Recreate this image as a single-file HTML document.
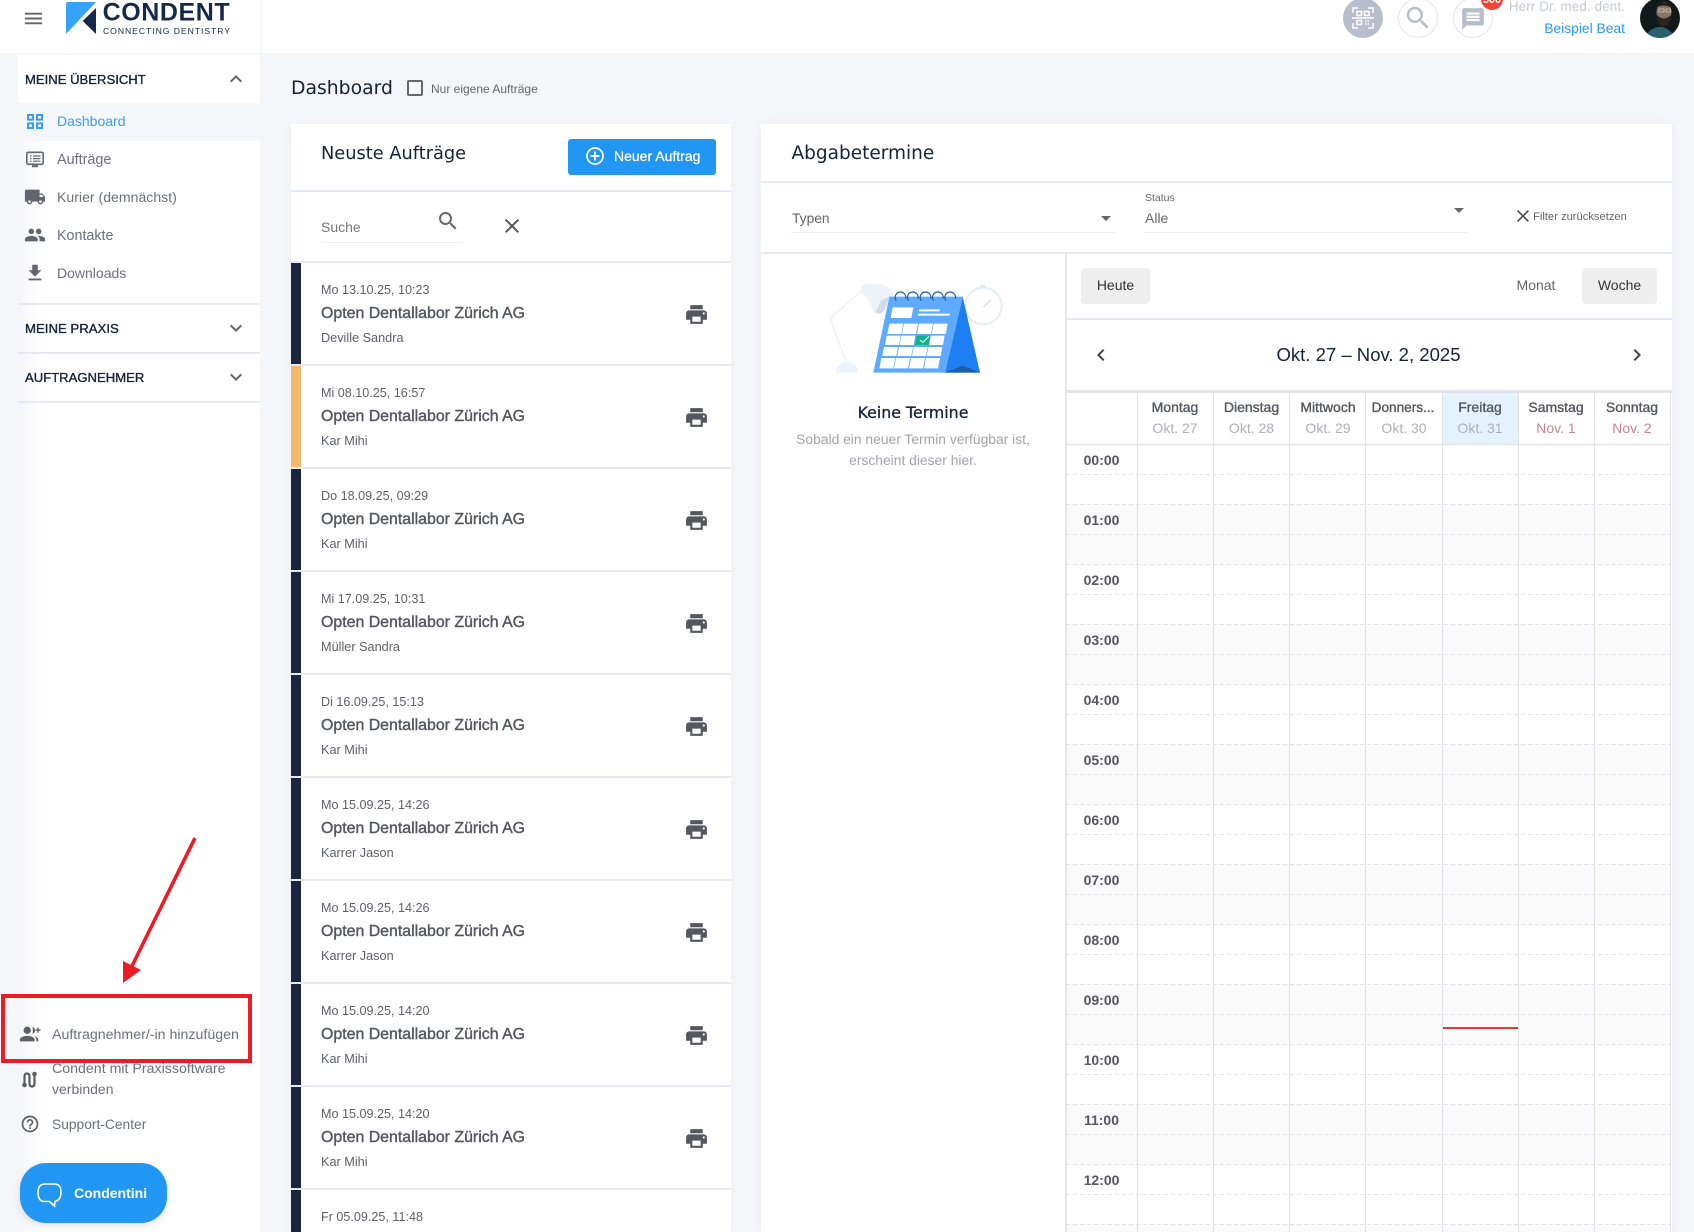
<!DOCTYPE html>
<html lang="de"><head><meta charset="utf-8"><title>Dashboard</title>
<style>
html,body{margin:0;padding:0}
body{width:1694px;height:1232px;overflow:hidden;background:#f5f6fa;position:relative;font-family:"Liberation Sans",sans-serif;color:#666}
div,svg{position:absolute}
.t{position:absolute;white-space:nowrap;line-height:20px;height:20px}
.m{-webkit-text-stroke:.3px currentColor}
.p{font-family:"DejaVu Sans",sans-serif;color:#16213a}
.hl{background:#e8e9f0;height:2px}
.sec{left:25px;font-size:13.1px;color:#16213a;-webkit-text-stroke:.35px #16213a}
.nav{left:57px;font-size:14px;color:#6d6f7a}
.row{left:291px;width:440px;height:103px}
.row .bar{left:0;top:1px;width:10px;height:102px;background:#1a2540}
.row .ln{left:0;top:0;width:440px;height:2px;background:#e8e9f0}
.d{left:30px;top:19px;font-size:12.6px;color:#5f6068}
.c{left:30px;top:43px;font-size:15.9px;color:#55565e;-webkit-text-stroke:.4px #55565e}
.n{left:30px;top:67px;font-size:12.7px;color:#5f6068}
.day{font-size:14px;color:#55565e;-webkit-text-stroke:.35px #55565e;transform:translateX(-50%);top:397px}
.dt{font-size:14px;color:#aeb0b5;transform:translateX(-50%);top:418px}
.we{color:#c9858a}
.h{left:1066px;width:71px;text-align:center;font-size:14px;font-weight:bold;color:#55565e}
</style></head>
<body>
<!-- top bar -->
<div style="left:0;top:0;width:260px;height:53px;background:#fff"></div>
<div style="left:262px;top:0;width:1432px;height:53px;background:#fff"></div>
<svg style="left:22px;top:7px" width="23" height="23" viewBox="0 0 24 24" fill="#666"><path d="M3 18h18v-2H3v2zm0-5h18v-2H3v2zm0-7v2h18V6H3z"/></svg>
<svg style="left:60px;top:0" width="180" height="40" viewBox="0 0 180 40">
<path d="M6 4Q6 2 8 2H36L6 34Z" fill="#35a3fb"/><path d="M36 8L22.7 21 36 34Z" fill="#16294a"/>
<text x="42.6" y="20.7" font-family="Liberation Sans" font-weight="bold" font-size="25" fill="#16294a" textLength="127" lengthAdjust="spacing">CONDENT</text>
<text x="43" y="33.8" font-family="Liberation Sans" font-size="8.6" fill="#16294a" textLength="127" lengthAdjust="spacing">CONNECTING DENTISTRY</text>
</svg>
<!-- top right -->
<div style="left:1343px;top:-2px;width:40px;height:40px;border-radius:50%;background:#b9bdcb"></div>
<svg style="left:1352px;top:7px" width="22" height="22" viewBox="0 0 22 22" fill="none" stroke="#fff" stroke-width="1.5"><path d="M1 6V1h5M16 1h5v5M21 16v5h-5M6 21H1v-5M0 11h22"/><rect x="5" y="4.5" width="4.5" height="4"/><rect x="12.5" y="4.5" width="4.5" height="4"/><rect x="5" y="13.5" width="4.5" height="4"/><path d="M13 14h4M13 17h4" stroke-dasharray="1.5 1"/></svg>
<div style="left:1398px;top:-2px;width:38px;height:38px;border-radius:50%;background:#fff;border:1px solid #e2e4ec"></div>
<svg style="left:1403px;top:3px" width="30" height="30" viewBox="0 0 24 24" fill="#b9bdcb"><path d="M15.5 14h-.79l-.28-.27C15.41 12.59 16 11.11 16 9.5 16 5.91 13.09 3 9.5 3S3 5.91 3 9.5 5.91 16 9.5 16c1.61 0 3.09-.59 4.23-1.57l.27.28v.79l5 4.99L20.49 19l-4.99-5zm-6 0C7.01 14 5 11.99 5 9.5S7.01 5 9.5 5 14 7.01 14 9.5 11.99 14 9.5 14z"/></svg>
<div style="left:1453px;top:-2px;width:38px;height:38px;border-radius:50%;background:#fff;border:1px solid #e2e4ec"></div>
<svg style="left:1460px;top:6px" width="26" height="26" viewBox="0 0 24 24" fill="#b9bdcb"><path d="M20 2H4c-1.1 0-1.99.9-1.99 2L2 22l4-4h14c1.1 0 2-.9 2-2V4c0-1.1-.9-2-2-2zm-2 12H6v-2h12v2zm0-3H6V9h12v2zm0-3H6V6h12v2z"/></svg>
<div style="left:1481px;top:-12px;width:22px;height:22px;border-radius:50%;background:#f44336"></div>
<svg style="left:1476px;top:0" width="32" height="10"><text x="16" y="3" text-anchor="middle" font-family="Liberation Sans" font-weight="bold" font-size="11" fill="#fff">500</text></svg>
<div class="t" style="right:69px;top:-3px;font-size:13.45px;color:#c6c9d5;letter-spacing:.1px">Herr Dr. med. dent.</div>
<div class="t" style="right:69px;top:18px;font-size:13.85px;color:#2f96f3">Beispiel Beat</div>
<svg style="left:1640px;top:-2px" width="40" height="40" viewBox="0 0 40 40"><defs><clipPath id="av"><circle cx="20" cy="20" r="20"/></clipPath></defs><g clip-path="url(#av)"><rect width="40" height="40" fill="#101a1a"/><path d="M5 40C7 33 14 29 20 29s12 4 15 11z" fill="#2a6070"/><ellipse cx="24" cy="14" rx="7.5" ry="10" fill="#8a7565"/><path d="M17 17q7 7 14 0q0 10-7 11t-7-11z" fill="#2a2421"/><path d="M17 6q7-4 14 1l-1 2q-6-3-13 0z" fill="#1f1e1b"/><rect x="19" y="11" width="5" height="3" fill="none" stroke="#ddd" stroke-width=".6"/><rect x="26" y="11" width="4.5" height="3" fill="none" stroke="#ddd" stroke-width=".6"/></g></svg>

<!-- sidebar -->
<div style="left:18px;top:55px;width:242px;height:1177px;background:linear-gradient(90deg,#f4f5f8,#fff 24px)"></div>
<div style="left:18px;top:53px;width:242px;height:2px;background:#f5f6fa"></div>
<div style="left:18px;top:55px;width:242px;height:48px;background:#fff"></div>
<div class="t sec" style="top:70px">MEINE ÜBERSICHT</div>
<svg style="left:224px;top:67px" width="24" height="24" viewBox="0 0 24 24" fill="#666"><path d="M12 8l-6 6 1.41 1.41L12 10.83l4.59 4.58L18 14z"/></svg>
<div style="left:18px;top:103px;width:242px;height:38px;background:#f5f6fa"></div>
<svg style="left:27px;top:114px" width="16" height="15" viewBox="0 0 16 15" fill="none" stroke="#3b9bf5" stroke-width="2"><rect x="1" y="1" width="5" height="4.6"/><rect x="10" y="1" width="5" height="4.6"/><rect x="1" y="9.4" width="5" height="4.6"/><rect x="10" y="9.4" width="5" height="4.6"/></svg>
<div class="t" style="left:57px;top:111px;font-size:14px;color:#3b9bf5">Dashboard</div>
<svg style="left:26px;top:151px" width="18" height="17" viewBox="0 0 18 17" fill="none" stroke="#63656e" stroke-width="1.6"><rect x=".8" y="1.3" width="16.4" height="12" rx="1.5"/><path d="M4 5h1.5M7 5h7.5M4 7.6h1.5M7 7.6h7.5M4 10.2h1.5M7 10.2h7.5" stroke-width="1.2"/><path d="M6 15.2h6" stroke-width="2"/></svg>
<div class="t nav" style="top:150px;font-size:14.4px">Aufträge</div>
<svg style="left:24px;top:186px" width="22" height="22" viewBox="0 0 24 24" fill="#63656e"><path d="M20 8h-3V4H3c-1.1 0-2 .9-2 2v11h2c0 1.66 1.34 3 3 3s3-1.34 3-3h6c0 1.66 1.34 3 3 3s3-1.34 3-3h2v-5l-3-4zM6 18.5c-.83 0-1.5-.67-1.5-1.5s.67-1.5 1.5-1.5 1.5.67 1.5 1.5-.67 1.5-1.5 1.5zm13.5-9l1.96 2.5H17V9.5h2.5zm-1.5 9c-.83 0-1.5-.67-1.5-1.5s.67-1.5 1.5-1.5 1.5.67 1.5 1.5-.67 1.5-1.5 1.5z"/></svg>
<div class="t nav" style="top:187px;font-size:14.1px">Kurier (demnächst)</div>
<svg style="left:24px;top:224px" width="22" height="22" viewBox="0 0 24 24" fill="#63656e"><path d="M16 11c1.66 0 2.99-1.34 2.99-3S17.66 5 16 5c-1.66 0-3 1.34-3 3s1.34 3 3 3zm-8 0c1.66 0 2.99-1.34 2.99-3S9.66 5 8 5C6.34 5 5 6.34 5 8s1.34 3 3 3zm0 2c-2.33 0-7 1.17-7 3.5V19h14v-2.5c0-2.33-4.67-3.5-7-3.5zm8 0c-.29 0-.62.02-.97.05 1.16.84 1.97 1.97 1.97 3.45V19h6v-2.5c0-2.33-4.67-3.5-7-3.5z"/></svg>
<div class="t nav" style="top:226px;font-size:14.3px">Kontakte</div>
<svg style="left:24px;top:262px" width="22" height="22" viewBox="0 0 24 24" fill="#63656e"><path d="M19 9h-4V3H9v6H5l7 7 7-7zM5 18v2h14v-2H5z"/></svg>
<div class="t nav" style="top:263px">Downloads</div>
<div class="hl" style="left:18px;top:303px;width:242px"></div>
<div class="t sec" style="top:319px;font-size:13.2px">MEINE PRAXIS</div>
<svg style="left:224px;top:316px" width="24" height="24" viewBox="0 0 24 24" fill="#666"><path d="M16.59 8.59L12 13.17 7.41 8.59 6 10l6 6 6-6z"/></svg>
<div class="hl" style="left:18px;top:352px;width:242px"></div>
<div class="t sec" style="top:368px">AUFTRAGNEHMER</div>
<svg style="left:224px;top:365px" width="24" height="24" viewBox="0 0 24 24" fill="#666"><path d="M16.59 8.59L12 13.17 7.41 8.59 6 10l6 6 6-6z"/></svg>
<div class="hl" style="left:18px;top:401px;width:242px"></div>

<svg style="left:19px;top:1023px" width="22" height="22" viewBox="0 0 24 24" fill="#5b5d67"><path d="M9 12a4 4 0 1 0 0-8 4 4 0 0 0 0 8zm0 2c-2.7 0-8 1.3-8 4v2h16v-2c0-2.7-5.3-4-8-4z"/><path d="M15 4.3a4 4 0 0 1 0 7.4zM16.5 14.2c2.3.6 4.5 1.8 4.5 3.8v2h-2v-2c0-1.5-1-2.8-2.500-3.800zM20 7V5h1.500v2h2v1.500h-2v2H20v-2h-2V7z"/></svg>
<div class="t" style="left:52px;top:1025px;font-size:14.2px;color:#6d6f7a">Auftragnehmer/-in hinzufügen</div>
<div class="t" style="left:52px;top:1059px;font-size:14.2px;color:#6d6f7a">Condent mit Praxissoftware</div>
<div class="t" style="left:52px;top:1079px;font-size:14px;color:#6d6f7a">verbinden</div>
<svg style="left:21px;top:1071px" width="18" height="18" viewBox="0 0 18 18" fill="none" stroke="#5b5d67" stroke-width="2.2"><path d="M3.500 13V5.500q0-3 2.500-3t2.500 3v7q0 3 2.500 3t2.500-3V4"/><circle cx="3.500" cy="14" r="2.300" fill="#5b5d67" stroke="none"/><circle cx="13.500" cy="3" r="2.300" fill="#5b5d67" stroke="none"/></svg>
<svg style="left:20px;top:1114px" width="20" height="20" viewBox="0 0 24 24" fill="#5b5d67"><path d="M11 18h2v-2h-2v2zm1-16C6.48 2 2 6.48 2 12s4.48 10 10 10 10-4.48 10-10S17.52 2 12 2zm0 18c-4.41 0-8-3.59-8-8s3.59-8 8-8 8 3.59 8 8-3.59 8-8 8zm0-14c-2.21 0-4 1.790-4 4h2c0-1.100.9-2 2-2s2 .9 2 2c0 2-3 1.750-3 5h2c0-2.250 3-2.500 3-5 0-2.210-1.790-4-4-4z"/></svg>
<div class="t" style="left:52px;top:1115px;font-size:13.8px;color:#6d6f7a">Support-Center</div>
<div style="left:20px;top:1163px;width:147px;height:60px;border-radius:26px;background:#2196f3;box-shadow:0 3px 8px rgba(0,0,0,.12)"></div>
<svg style="left:36px;top:1182px" width="27" height="26" viewBox="0 0 27 26" fill="none" stroke="#fff" stroke-width="1.6"><path d="M9 2h9q7 0 7 8t-6 9.500l-.5 4.500-5-4.500H8Q2 19 2 10.500T9 2z"/></svg>
<div class="t" style="left:74px;top:1183px;font-size:14px;font-weight:bold;color:#fff">Condentini</div>

<!-- heading -->
<div class="t p" style="left:291px;top:79px;font-size:18.8px">Dashboard</div>
<div style="left:407px;top:80px;width:12px;height:12px;border:2px solid #666;border-radius:2px;background:#f5f6fa"></div>
<div class="t" style="left:431px;top:79px;font-size:12px;color:#666">Nur eigene Aufträge</div>

<!-- left card -->
<div style="left:291px;top:124px;width:440px;height:1108px;background:#fff;box-shadow:0 0 8px rgba(20,30,60,.04)"></div>
<div class="t p" style="left:321px;top:144px;font-size:17.8px">Neuste Aufträge</div>
<div style="left:568px;top:139px;width:148px;height:36px;background:#2196f3;border-radius:3px"></div>
<svg style="left:585px;top:146px" width="20" height="20" viewBox="0 0 20 20" fill="none" stroke="#fff" stroke-width="1.7"><circle cx="10" cy="10" r="8"/><path d="M10 5.5v9M5.5 10h9"/></svg>
<div class="t" style="left:614px;top:146px;font-size:14px;color:#fff;-webkit-text-stroke:.25px #fff">Neuer Auftrag</div>
<div class="hl" style="left:291px;top:190px;width:440px"></div>
<div class="t" style="left:321px;top:217px;font-size:14px;color:#777">Suche</div>
<svg style="left:436px;top:209px" width="24" height="24" viewBox="0 0 24 24" fill="#666"><path d="M15.5 14h-.79l-.28-.27C15.41 12.59 16 11.11 16 9.5 16 5.91 13.09 3 9.5 3S3 5.91 3 9.5 5.91 16 9.5 16c1.61 0 3.09-.59 4.23-1.57l.27.28v.79l5 4.99L20.49 19l-4.99-5zm-6 0C7.01 14 5 11.99 5 9.5S7.01 5 9.5 5 14 7.01 14 9.5 11.99 14 9.5 14z"/></svg>
<svg style="left:500px;top:214px" width="24" height="24" viewBox="0 0 24 24" fill="#555"><path d="M19 6.41L17.59 5 12 10.59 6.41 5 5 6.41 10.59 12 5 17.59 6.41 19 12 13.41 17.59 19 19 17.59 13.41 12z"/></svg>
<div style="left:321px;top:242px;width:141px;height:1px;background:#eceef2"></div>

<!-- rows -->
<div class="row" style="top:261px"><div class="bar"></div><div class="ln"></div><div class="t d">Mo 13.10.25, 10:23</div><div class="t c">Opten Dentallabor Zürich AG</div><div class="t n">Deville Sandra</div><svg style="left:393px;top:41px" width="25" height="25" viewBox="0 0 24 24" fill="#55565e"><path d="M19 8H5c-1.66 0-3 1.34-3 3v6h4v4h12v-4h4v-6c0-1.66-1.34-3-3-3zm-3 11H8v-5h8v5zm3-7c-.55 0-1-.45-1-1s.45-1 1-1 1 .45 1 1-.45 1-1 1zm-1-9H6v4h12V3z"/></svg></div>
<div class="row" style="top:364px"><div class="bar" style="background:#f2bb6c"></div><div class="ln"></div><div class="t d">Mi 08.10.25, 16:57</div><div class="t c">Opten Dentallabor Zürich AG</div><div class="t n">Kar Mihi</div><svg style="left:393px;top:41px" width="25" height="25" viewBox="0 0 24 24" fill="#55565e"><path d="M19 8H5c-1.66 0-3 1.34-3 3v6h4v4h12v-4h4v-6c0-1.66-1.34-3-3-3zm-3 11H8v-5h8v5zm3-7c-.55 0-1-.45-1-1s.45-1 1-1 1 .45 1 1-.45 1-1 1zm-1-9H6v4h12V3z"/></svg></div>
<div class="row" style="top:467px"><div class="bar"></div><div class="ln"></div><div class="t d">Do 18.09.25, 09:29</div><div class="t c">Opten Dentallabor Zürich AG</div><div class="t n">Kar Mihi</div><svg style="left:393px;top:41px" width="25" height="25" viewBox="0 0 24 24" fill="#55565e"><path d="M19 8H5c-1.66 0-3 1.34-3 3v6h4v4h12v-4h4v-6c0-1.66-1.34-3-3-3zm-3 11H8v-5h8v5zm3-7c-.55 0-1-.45-1-1s.45-1 1-1 1 .45 1 1-.45 1-1 1zm-1-9H6v4h12V3z"/></svg></div>
<div class="row" style="top:570px"><div class="bar"></div><div class="ln"></div><div class="t d">Mi 17.09.25, 10:31</div><div class="t c">Opten Dentallabor Zürich AG</div><div class="t n">Müller Sandra</div><svg style="left:393px;top:41px" width="25" height="25" viewBox="0 0 24 24" fill="#55565e"><path d="M19 8H5c-1.66 0-3 1.34-3 3v6h4v4h12v-4h4v-6c0-1.66-1.34-3-3-3zm-3 11H8v-5h8v5zm3-7c-.55 0-1-.45-1-1s.45-1 1-1 1 .45 1 1-.45 1-1 1zm-1-9H6v4h12V3z"/></svg></div>
<div class="row" style="top:673px"><div class="bar"></div><div class="ln"></div><div class="t d">Di 16.09.25, 15:13</div><div class="t c">Opten Dentallabor Zürich AG</div><div class="t n">Kar Mihi</div><svg style="left:393px;top:41px" width="25" height="25" viewBox="0 0 24 24" fill="#55565e"><path d="M19 8H5c-1.66 0-3 1.34-3 3v6h4v4h12v-4h4v-6c0-1.66-1.34-3-3-3zm-3 11H8v-5h8v5zm3-7c-.55 0-1-.45-1-1s.45-1 1-1 1 .45 1 1-.45 1-1 1zm-1-9H6v4h12V3z"/></svg></div>
<div class="row" style="top:776px"><div class="bar"></div><div class="ln"></div><div class="t d">Mo 15.09.25, 14:26</div><div class="t c">Opten Dentallabor Zürich AG</div><div class="t n">Karrer Jason</div><svg style="left:393px;top:41px" width="25" height="25" viewBox="0 0 24 24" fill="#55565e"><path d="M19 8H5c-1.66 0-3 1.34-3 3v6h4v4h12v-4h4v-6c0-1.66-1.34-3-3-3zm-3 11H8v-5h8v5zm3-7c-.55 0-1-.45-1-1s.45-1 1-1 1 .45 1 1-.45 1-1 1zm-1-9H6v4h12V3z"/></svg></div>
<div class="row" style="top:879px"><div class="bar"></div><div class="ln"></div><div class="t d">Mo 15.09.25, 14:26</div><div class="t c">Opten Dentallabor Zürich AG</div><div class="t n">Karrer Jason</div><svg style="left:393px;top:41px" width="25" height="25" viewBox="0 0 24 24" fill="#55565e"><path d="M19 8H5c-1.66 0-3 1.34-3 3v6h4v4h12v-4h4v-6c0-1.66-1.34-3-3-3zm-3 11H8v-5h8v5zm3-7c-.55 0-1-.45-1-1s.45-1 1-1 1 .45 1 1-.45 1-1 1zm-1-9H6v4h12V3z"/></svg></div>
<div class="row" style="top:982px"><div class="bar"></div><div class="ln"></div><div class="t d">Mo 15.09.25, 14:20</div><div class="t c">Opten Dentallabor Zürich AG</div><div class="t n">Kar Mihi</div><svg style="left:393px;top:41px" width="25" height="25" viewBox="0 0 24 24" fill="#55565e"><path d="M19 8H5c-1.66 0-3 1.34-3 3v6h4v4h12v-4h4v-6c0-1.66-1.34-3-3-3zm-3 11H8v-5h8v5zm3-7c-.55 0-1-.45-1-1s.45-1 1-1 1 .45 1 1-.45 1-1 1zm-1-9H6v4h12V3z"/></svg></div>
<div class="row" style="top:1085px"><div class="bar"></div><div class="ln"></div><div class="t d">Mo 15.09.25, 14:20</div><div class="t c">Opten Dentallabor Zürich AG</div><div class="t n">Kar Mihi</div><svg style="left:393px;top:41px" width="25" height="25" viewBox="0 0 24 24" fill="#55565e"><path d="M19 8H5c-1.66 0-3 1.34-3 3v6h4v4h12v-4h4v-6c0-1.66-1.34-3-3-3zm-3 11H8v-5h8v5zm3-7c-.55 0-1-.45-1-1s.45-1 1-1 1 .45 1 1-.45 1-1 1zm-1-9H6v4h12V3z"/></svg></div>
<div class="row" style="top:1188px;height:44px"><div class="bar" style="height:43px"></div><div class="ln"></div><div class="t d">Fr 05.09.25, 11:48</div></div>

<!-- right card -->
<div style="left:761px;top:124px;width:911px;height:1108px;background:#fff;box-shadow:0 0 8px rgba(20,30,60,.05)"></div>
<div class="t p" style="left:791.5px;top:144px;font-size:18.5px">Abgabetermine</div>
<div class="hl" style="left:761px;top:181px;width:911px"></div>
<div class="t" style="left:792px;top:209px;font-size:13.8px;color:#666">Typen</div>
<div style="left:1100.5px;top:216px;border-left:5px solid transparent;border-right:5px solid transparent;border-top:5px solid #666"></div>
<div style="left:791px;top:232px;width:324px;height:1px;background:#eceef2"></div>
<div class="t" style="left:1145px;top:188px;font-size:10.5px;color:#666">Status</div>
<div class="t" style="left:1145px;top:208px;font-size:14px;color:#666">Alle</div>
<div style="left:1454px;top:208px;border-left:5px solid transparent;border-right:5px solid transparent;border-top:5px solid #666"></div>
<div style="left:1145px;top:232px;width:323px;height:1px;background:#eceef2"></div>
<svg style="left:1517px;top:210px" width="12" height="12" viewBox="5 5 14 14" fill="#555"><path d="M19 6.41L17.59 5 12 10.59 6.41 5 5 6.41 10.59 12 5 17.59 6.41 19 12 13.41 17.59 19 19 17.59 13.41 12z"/></svg>
<div class="t" style="left:1533px;top:207px;font-size:11.2px;color:#666">Filter zurücksetzen</div>
<div class="hl" style="left:761px;top:252px;width:911px"></div>
<div style="left:1065px;top:253px;width:2px;height:979px;background:#e4e5ed"></div>

<!-- illustration -->
<svg style="left:830px;top:270px" width="200" height="120" viewBox="0 0 600 360">
<circle cx="460" cy="108" r="55" fill="#fff" stroke="#e4edf5" stroke-width="6"/><rect x="450" y="44" width="16" height="8" fill="#dfe8f0"/>
<path d="M460 112L482 90" stroke="#b9cde0" stroke-width="2.5"/>
<path d="M0 145L110 50M0 145L48 275" stroke="#e6eef5" stroke-width="3" fill="none"/><circle cx="0" cy="145" r="10" fill="#edf3f8"/>
<path d="M18 308a32 32 0 0 1 66 0z" fill="#edf3f8"/>
<path d="M92 52Q96 40 122 40L165 44Q190 60 195 85L150 130Q138 140 128 120Q115 85 96 72z" fill="#eef3f8"/>
<path d="M152 92L178 80 165 118Q150 140 138 125z" fill="#cfdce7"/>
<path d="M398 80L345 308H450Z" fill="#1e7ff5"/><path d="M345 308L398 287 450 308Z" fill="#1a5ea6"/>
<path d="M178 80H398L345 308H130Z" fill="#5eaaff"/>
<g fill="none" stroke="#1f5d9e" stroke-width="3.5"><path d="M199 92a16 16 0 1 1 28 -6M236 92a16 16 0 1 1 28 -6M274 92a16 16 0 1 1 28 -6M311 92a16 16 0 1 1 28 -6M348 92a16 16 0 1 1 28 -6"/></g>
<path d="M188 112H250L244 144H182Z" fill="#fff"/>
<path d="M268 118H330L328 124H266ZM265 131H360L358 137H263Z" fill="#fff"/>
<g fill="#fff">
<path d="M178 161H220L214 192H172ZM222 161H264L258 192H216ZM267 161H309L303 192H261ZM311 161H353L347 192H305Z"/>
<path d="M170 197H212L207 225H165ZM214 197H256L251 225H209ZM302 197H344L339 225H297Z"/>
<path d="M162 231H204L199 258H157ZM207 231H249L244 258H202ZM251 231H293L288 258H246ZM295 231H337L332 258H290Z"/>
<path d="M154 264H196L190 295H148ZM198 264H240L234 295H192ZM243 264H285L279 295H237ZM288 264H330L324 295H282Z"/>
</g>
<path d="M260 197H302L297 225H255Z" fill="#12b28a"/><path d="M270 210L279 217 297 199" stroke="#fff" stroke-width="3" fill="none"/>
</svg>
<div class="t p m" style="left:761px;width:304px;text-align:center;top:403px;font-size:15.8px">Keine Termine</div>
<div class="t" style="left:761px;width:304px;text-align:center;top:429px;font-size:13.85px;color:#a3a4a9">Sobald ein neuer Termin verfügbar ist,</div>
<div class="t" style="left:761px;width:304px;text-align:center;top:450px;font-size:13.85px;color:#a3a4a9">erscheint dieser hier.</div>

<!-- calendar toolbar -->
<div style="left:1081px;top:268px;width:69px;height:36px;background:#eee;border-radius:4px"></div>
<div class="t" style="left:1081px;width:69px;text-align:center;top:275px;font-size:14px;color:#333">Heute</div>
<div class="t" style="left:1500px;width:72px;text-align:center;top:275px;font-size:14px;color:#666">Monat</div>
<div style="left:1582px;top:268px;width:75px;height:36px;background:#eee;border-radius:4px"></div>
<div class="t" style="left:1582px;width:75px;text-align:center;top:275px;font-size:14px;color:#333">Woche</div>
<div class="hl" style="left:1067px;top:318px;width:605px"></div>
<svg style="left:1089px;top:343px" width="24" height="24" viewBox="0 0 24 24" fill="#444"><path d="M15.41 7.41L14 6l-6 6 6 6 1.41-1.41L10.83 12z"/></svg>
<div class="t" style="left:1267px;width:203px;text-align:center;top:345px;font-size:18.55px;color:#16213a">Okt. 27 – Nov. 2, 2025</div>
<svg style="left:1625px;top:343px" width="24" height="24" viewBox="0 0 24 24" fill="#444"><path d="M10 6L8.59 7.41 13.17 12l-4.58 4.59L10 18l6-6z"/></svg>

<!-- calendar grid -->
<div style="left:1067px;top:390px;width:605px;height:3px;background:#e2e3e9"></div>
<div style="left:1442.5px;top:393px;width:76px;height:51px;background:#e3f2fd"></div>
<div style="left:1067px;top:444px;width:603px;height:788px;background:repeating-linear-gradient(180deg,#fff 0,#fff 60px,#fafafa 60px,#fafafa 120px)"></div>
<svg style="left:1066px;top:393px" width="606" height="839" viewBox="0 0 606 839">
<path d="M0 51.5H604" stroke="#e2e2e6" stroke-width="1.2" fill="none"/>
<g stroke="#e3e3e6" stroke-width="1" stroke-dasharray="4 3" fill="none">
<path d="M0 81.5H604M0 111.5H604M0 141.5H604M0 171.5H604M0 201.5H604M0 231.5H604M0 261.5H604M0 291.5H604M0 321.5H604M0 351.5H604M0 381.5H604M0 411.5H604M0 441.5H604M0 471.5H604M0 501.5H604M0 531.5H604M0 561.5H604M0 591.5H604M0 621.5H604M0 651.5H604M0 681.5H604M0 711.5H604M0 741.5H604M0 771.5H604M0 801.5H604M0 831.5H604"/>
</g>
<g stroke="#e2e2e6" stroke-width="1.1" fill="none">
<path d="M71.5 0V839M147.5 0V839M223.5 0V839M299.5 0V839M376.5 0V839M452.5 0V839M528.5 0V839M604.5 0V839"/>
</g>
</svg>
<div style="left:1443px;top:1027px;width:75px;height:2px;background:#e53935"></div>
<div class="t day" style="left:1175px">Montag</div><div class="t dt" style="left:1175px">Okt. 27</div>
<div class="t day" style="left:1251.5px">Dienstag</div><div class="t dt" style="left:1251.5px">Okt. 28</div>
<div class="t day" style="left:1328px">Mittwoch</div><div class="t dt" style="left:1328px">Okt. 29</div>
<div class="t day" style="left:1403px;font-size:13.6px;top:398px">Donners...</div><div class="t dt" style="left:1404px">Okt. 30</div>
<div class="t day" style="left:1480px">Freitag</div><div class="t dt" style="left:1480px">Okt. 31</div>
<div class="t day" style="left:1556px">Samstag</div><div class="t dt we" style="left:1556px">Nov. 1</div>
<div class="t day" style="left:1632px">Sonntag</div><div class="t dt we" style="left:1632px">Nov. 2</div>
<div class="t h" style="top:450px">00:00</div>
<div class="t h" style="top:510px">01:00</div>
<div class="t h" style="top:570px">02:00</div>
<div class="t h" style="top:630px">03:00</div>
<div class="t h" style="top:690px">04:00</div>
<div class="t h" style="top:750px">05:00</div>
<div class="t h" style="top:810px">06:00</div>
<div class="t h" style="top:870px">07:00</div>
<div class="t h" style="top:930px">08:00</div>
<div class="t h" style="top:990px">09:00</div>
<div class="t h" style="top:1050px">10:00</div>
<div class="t h" style="top:1110px">11:00</div>
<div class="t h" style="top:1170px">12:00</div>

<!-- annotations -->
<div style="left:1px;top:994px;width:243px;height:61px;border:4px solid #ed1c24"></div>
<svg style="left:100px;top:830px" width="110" height="165" viewBox="100 830 110 165">
<path d="M195 838L132 966" stroke="#ed1c24" stroke-width="3.6" fill="none"/>
<path d="M123 983L123 961L141 970Z" fill="#ed1c24"/>
</svg>
</body></html>
